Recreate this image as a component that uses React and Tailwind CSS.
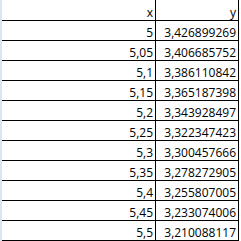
const rows = [
  ["5", "3,426899269"],
  ["5,05", "3,406685752"],
  ["5,1", "3,386110842"],
  ["5,15", "3,365187398"],
  ["5,2", "3,343928497"],
  ["5,25", "3,322347423"],
  ["5,3", "3,300457666"],
  ["5,35", "3,278272905"],
  ["5,4", "3,255807005"],
  ["5,45", "3,233074006"],
  ["5,5", "3,210088117"],
];

const Row = ({ x, y, header }) => (
  <div className={`flex border-b border-black ${header ? "h-[21px]" : "h-[20px]"}`}>
    <div className="w-[154px] border-r border-black flex items-end justify-end pr-[2px] pb-[1px]">
      {x}
    </div>
    <div className="w-[83px] border-r border-black flex items-end justify-end pr-[2px] pb-[1px]">
      {y}
    </div>
  </div>
);

export default function App() {
  return (
    <div className="w-[241px] h-[241px] bg-white flex overflow-hidden">
      {/* row header strip */}
      <div className="w-[2px] bg-[#dce4ee]" />
      <div
        className="flex flex-col text-black text-[12px] leading-[13px]"
        style={{ fontFamily: '"Open Sans", "Liberation Sans", sans-serif' }}
      >
        <Row x="x" y="y" header />
        {rows.map(([x, y]) => (
          <Row key={x} x={x} y={y} />
        ))}
      </div>
    </div>
  );
}
